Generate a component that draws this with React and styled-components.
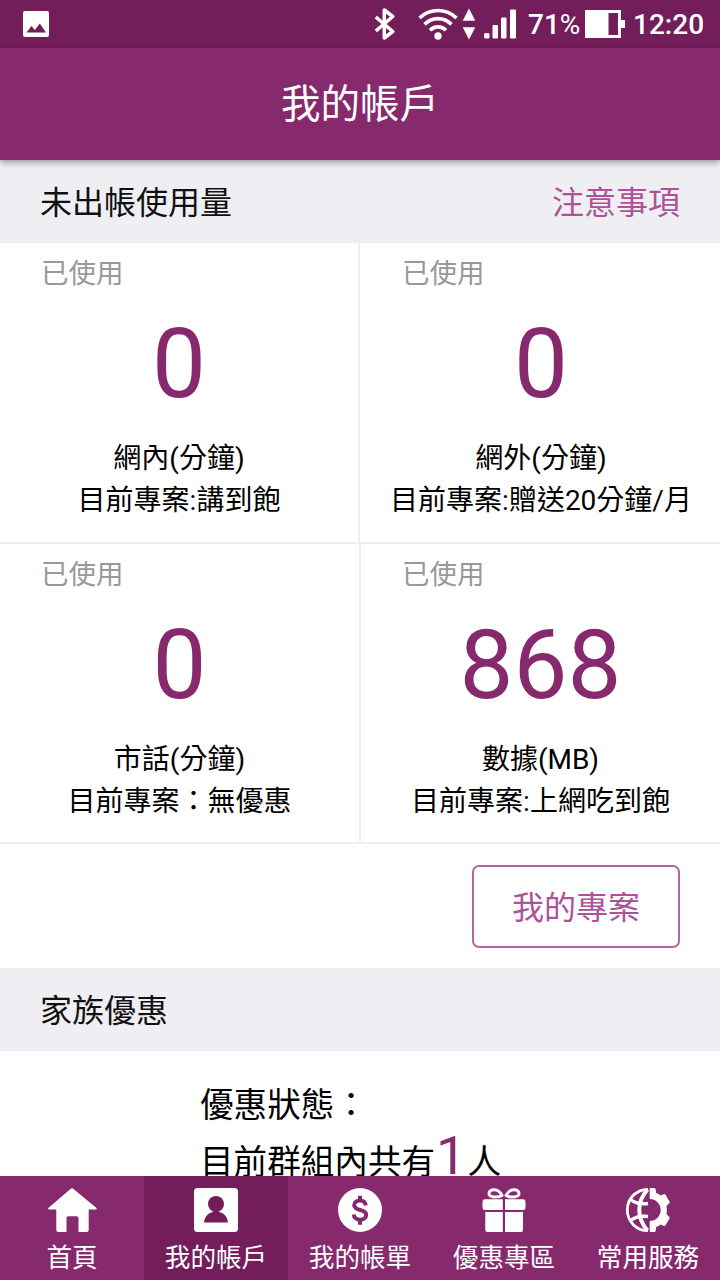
import React from 'react'
import styled, { createGlobalStyle } from 'styled-components'

const GlobalStyle = createGlobalStyle`
  body {
    margin: 0;
    background: #fff;
    font-family: Roboto, "Noto Sans CJK TC", sans-serif;
    color: #000;
  }
  * {
    box-sizing: border-box;
  }
`

const Screen = styled.div`
  width: 720px;
  height: 1280px;
  display: flex;
  flex-direction: column;
  overflow: hidden;
  background: #fff;
`

const StatusBar = styled.div`
  height: 48px;
  flex: none;
  display: flex;
  align-items: center;
  padding: 0 16px 0 23px;
  background: #741d5b;
  color: #fff;
`

const StatusIcons = styled.div`
  margin-left: auto;
  display: flex;
  align-items: center;
`

const StatusText = styled.span`
  font-size: 28px;
  line-height: 48px;
  font-weight: 500;
  padding-top: 2px;
  width: ${props => props.$width}px;
  margin-left: ${props => props.$left || 0}px;
  white-space: nowrap;
`

const Percent = styled.span`
  font-weight: 400;
`

const Header = styled.header`
  height: 112px;
  flex: none;
  display: flex;
  align-items: center;
  justify-content: center;
  padding-top: 2px;
  z-index: 1;
  background: #86296d;
  box-shadow: 0 2px 7px rgba(0, 0, 0, 0.4);
  color: #fff;
`

const Title = styled.h1`
  margin: 0;
  font-size: 39.5px;
  line-height: 56px;
  font-weight: 400;
`

const Main = styled.main`
  flex: 1;
  min-height: 0;
  overflow: hidden;
`

const SectionBar = styled.div`
  height: 83px;
  display: flex;
  align-items: center;
  justify-content: space-between;
  padding: 2px 40px 0;
  background: #efeef3;
  font-size: 32px;
  line-height: 48px;
  color: #111;
`

const NoticeLink = styled.a`
  color: #ad5298;
`

const UsageGrid = styled.div`
  display: flex;
  flex-direction: column;
`

const UsageRow = styled.div`
  height: ${props => props.$height}px;
  display: grid;
  grid-template-columns: ${props => props.$left}px 1fr;
  border-bottom: 2px solid #efeef0;
`

const UsageCell = styled.div`
  display: flex;
  flex-direction: column;
  align-items: center;
  padding-top: 11px;
  white-space: nowrap;

  &:first-child {
    border-right: 2px solid #efeef0;
  }

  &:last-child {
    padding-left: ${props => props.$shift || 0}px;
  }
`

const UsedLabel = styled.div`
  align-self: flex-start;
  padding-left: ${props => props.$left}px;
  font-size: 27.5px;
  line-height: 40px;
  color: #999;
`

const Amount = styled.div`
  margin-top: 20px;
  font-size: 96px;
  line-height: 100px;
  color: #86296d;
`

const UsageText = styled.div`
  font-size: 28px;
  line-height: 42px;

  &:nth-child(3) {
    margin-top: 24px;
  }
`

const ButtonRow = styled.div`
  height: 124px;
  display: flex;
  justify-content: flex-end;
  padding: 21px 40px 0;
`

const PlanButton = styled.button`
  width: 208px;
  height: 83px;
  padding: 0 0 4px;
  border: 2px solid #b3679f;
  border-radius: 7px;
  background: #fff;
  color: #ad5298;
  font-family: inherit;
  font-size: 32px;
`

const FamilyInfo = styled.div`
  padding: 26px 0 0 200px;
  font-size: 33.6px;
  line-height: 58px;
  white-space: nowrap;
`

const MemberLine = styled.div`
  margin-top: -4px;
`

const MemberCount = styled.span`
  margin: 0 1px;
  font-size: 54px;
  line-height: 50px;
  color: #86296d;
`

const TabBar = styled.nav`
  height: 104px;
  flex: none;
  display: grid;
  grid-template-columns: repeat(5, 1fr);
  background: #86296d;
`

const Tab = styled.div`
  display: flex;
  flex-direction: column;
  align-items: center;
  padding-top: 10px;
  background: ${props => props.$active ? '#741d5b' : 'transparent'};
  color: #fff;
  font-size: 25.6px;
  line-height: 38px;
`

const TabIcon = styled.svg`
  width: 52px;
  height: 48px;
  flex: none;
  margin-bottom: 5px;
  fill: #fff;
`

const PictureIcon = () => (
  <svg width="26" height="48" viewBox="0 0 26 48">
    <rect y="11" width="26" height="26" rx="2" fill="#fff" />
    <path d="M3.500 32.500 8.500 26l3.300 4 5-6.500 6.200 9z" fill="#741d5b" />
  </svg>
)

const SignalIcons = () => (
  <svg width="146" height="48" viewBox="374 0 146 48" fill="#fff">
    <path d="m375.800 17 17 14.500-8.500 6.500V10l8.500 6.500-17 14.500" fill="none" stroke="#fff" strokeWidth="3.500" strokeLinejoin="round" />
    <g fill="none" stroke="#fff" strokeWidth="3.700">
      <path d="M419.500 18c10.500-10 26.500-10 37 0" />
      <path d="M424.500 24.300c8-7.500 19-7.500 27 0" />
      <path d="M430 30.300c4.500-4.500 11.500-4.500 16 0" />
    </g>
    <circle cx="438" cy="36" r="3.700" />
    <path d="m469 8.500 6.300 12.300h-12.600zM469 39.500l-6.300-12.300h12.600z" />
    <rect x="484" y="33" width="5.500" height="5.500" rx="1.500" />
    <rect x="492.500" y="25" width="5.500" height="13.500" rx="1" />
    <rect x="501" y="17.500" width="5.500" height="21" rx="1" />
    <rect x="510" y="9.500" width="6" height="29" rx="1" />
  </svg>
)

const BatteryIcon = () => (
  <svg width="41" height="48" viewBox="584 0 41 48">
    <path d="M585 10h36v10h4v8h-4v10h-36z" fill="#fff" />
    <path d="M608.500 13h9.500v22h-9.500z" fill="#741d5b" />
  </svg>
)

const tabs = [
  {
    label: '首頁',
    icon: <path d="M27.200 2.800 50.500 22q.8 1.500-.8 1.500h-7V44q0 2-2 2h-8.200V32q0-1.800-1.800-1.800h-8.400q-1.800 0-1.800 1.800v14h-8.200q-2 0-2-2V23.500h-7Q1.500 23.500 2.300 22L24.800 2.800q1.200-1 2.400 0z" />
  },
  {
    label: '我的帳戶',
    active: true,
    icon: (
      <>
        <rect x="4" y="2" width="44" height="44" rx="3.500" />
        <g fill="#741d5b">
          <circle cx="26" cy="18" r="8" />
          <path d="M23 24h6v2c5 1 8.500 5 9 10.500H14c.5-5.500 4-9.500 9-10.500z" />
        </g>
      </>
    )
  },
  {
    label: '我的帳單',
    icon: (
      <>
        <circle cx="26" cy="24" r="22" />
        <path d="M31.800 19.500c-.5-3.500-2.500-5-5.800-5-3.500 0-5.800 1.800-5.800 4.700 0 6.500 12 3 12 9.600 0 3.200-2.700 4.900-6.200 4.900s-6-2-6.300-5.200M26 9.700v5m0 19v5" fill="none" stroke="#86296d" strokeWidth="4" />
      </>
    )
  },
  {
    label: '優惠專區',
    icon: (
      <>
        <path d="M24 9.500C20 12 11 11.500 11 7.500 11 3 20 1.500 24 9.500zm4 0c4 2.500 13 2 13-2C41 3 32 1.500 28 9.500z" fill="none" stroke="#fff" strokeWidth="3" strokeLinejoin="round" />
        <path d="M7 13.300h17.800V24H7q-2.500 0-2.500-2.500v-5.700q0-2.500 2.500-2.500zm20 0h18q2.500 0 2.500 2.500v5.700q0 2.500-2.500 2.500H27zM7.300 26h17.500v20h-15.500q-2 0-2-2zm19.700 0h18v18q0 2-2 2H27z" />
      </>
    )
  },
  {
    label: '常用服務',
    icon: (
      <>
        <g fill="none" stroke="#fff">
          <path d="M26 3.300a20.700 20.700 0 0 0 0 41.400" strokeWidth="2.800" />
          <path d="M25.500 3.500C14.500 16 14.500 32 25.500 44.500" strokeWidth="4" />
          <path d="M8 13q7 6 18 4.500M8 35q7-6 18-4.500" strokeWidth="3.400" />
        </g>
        <path d="M27.700 2h4.500q1.300 0 1.500 1.500l.5 3.500q2.500.8 4.500 2.500l2.800-1.300q1.300-.5 2 .5l4 6.800q.7 1.200-.5 2L44.500 20q.8 4 0 8l2.500 2.500q1.200.8.5 2l-4 6.800q-.7 1-2 .5l-2.800-1.300q-2 1.700-4.500 2.500l-.5 3.500q-.2 1.500-1.500 1.500h-4.500V35a11 11 0 0 0 0-22z" />
      </>
    )
  }
]

const UsageItem = ({ left, shift, amount, unit, plan }) => (
  <UsageCell $shift={shift}>
    <UsedLabel $left={left}>已使用</UsedLabel>
    <Amount>{amount}</Amount>
    <UsageText>{unit}</UsageText>
    <UsageText>{plan}</UsageText>
  </UsageCell>
)

const App = () => {
  return (
    <Screen lang="zh-TW">
      <GlobalStyle />
      <StatusBar>
        <PictureIcon />
        <StatusIcons>
          <SignalIcons />
          <StatusText $left={8} $width={56}>71<Percent>%</Percent></StatusText>
          <BatteryIcon />
          <StatusText $left={8} $width={71}>12:20</StatusText>
        </StatusIcons>
      </StatusBar>
      <Header>
        <Title>我的帳戶</Title>
      </Header>
      <Main>
        <SectionBar>
          <span>未出帳使用量</span>
          <NoticeLink>注意事項</NoticeLink>
        </SectionBar>
        <UsageGrid>
          <UsageRow $height={301} $left={360}>
            <UsageItem left={41} amount="0" unit="網內(分鐘)" plan="目前專案:講到飽" />
            <UsageItem left={40} shift={2} amount="0" unit="網外(分鐘)" plan="目前專案:贈送20分鐘/月" />
          </UsageRow>
          <UsageRow $height={300} $left={361}>
            <UsageItem left={41} amount="0" unit="市話(分鐘)" plan="目前專案：無優惠" />
            <UsageItem left={41} amount="868" unit="數據(MB)" plan="目前專案:上網吃到飽" />
          </UsageRow>
        </UsageGrid>
        <ButtonRow>
          <PlanButton>我的專案</PlanButton>
        </ButtonRow>
        <SectionBar>
          <span>家族優惠</span>
        </SectionBar>
        <FamilyInfo>
          <div>優惠狀態：</div>
          <MemberLine>目前群組內共有<MemberCount>1</MemberCount>人</MemberLine>
        </FamilyInfo>
      </Main>
      <TabBar>
        {tabs.map(item => (
          <Tab key={item.label} $active={item.active}>
            <TabIcon viewBox="0 0 52 48">{item.icon}</TabIcon>
            {item.label}
          </Tab>
        ))}
      </TabBar>
    </Screen>
  )
}

export default App
